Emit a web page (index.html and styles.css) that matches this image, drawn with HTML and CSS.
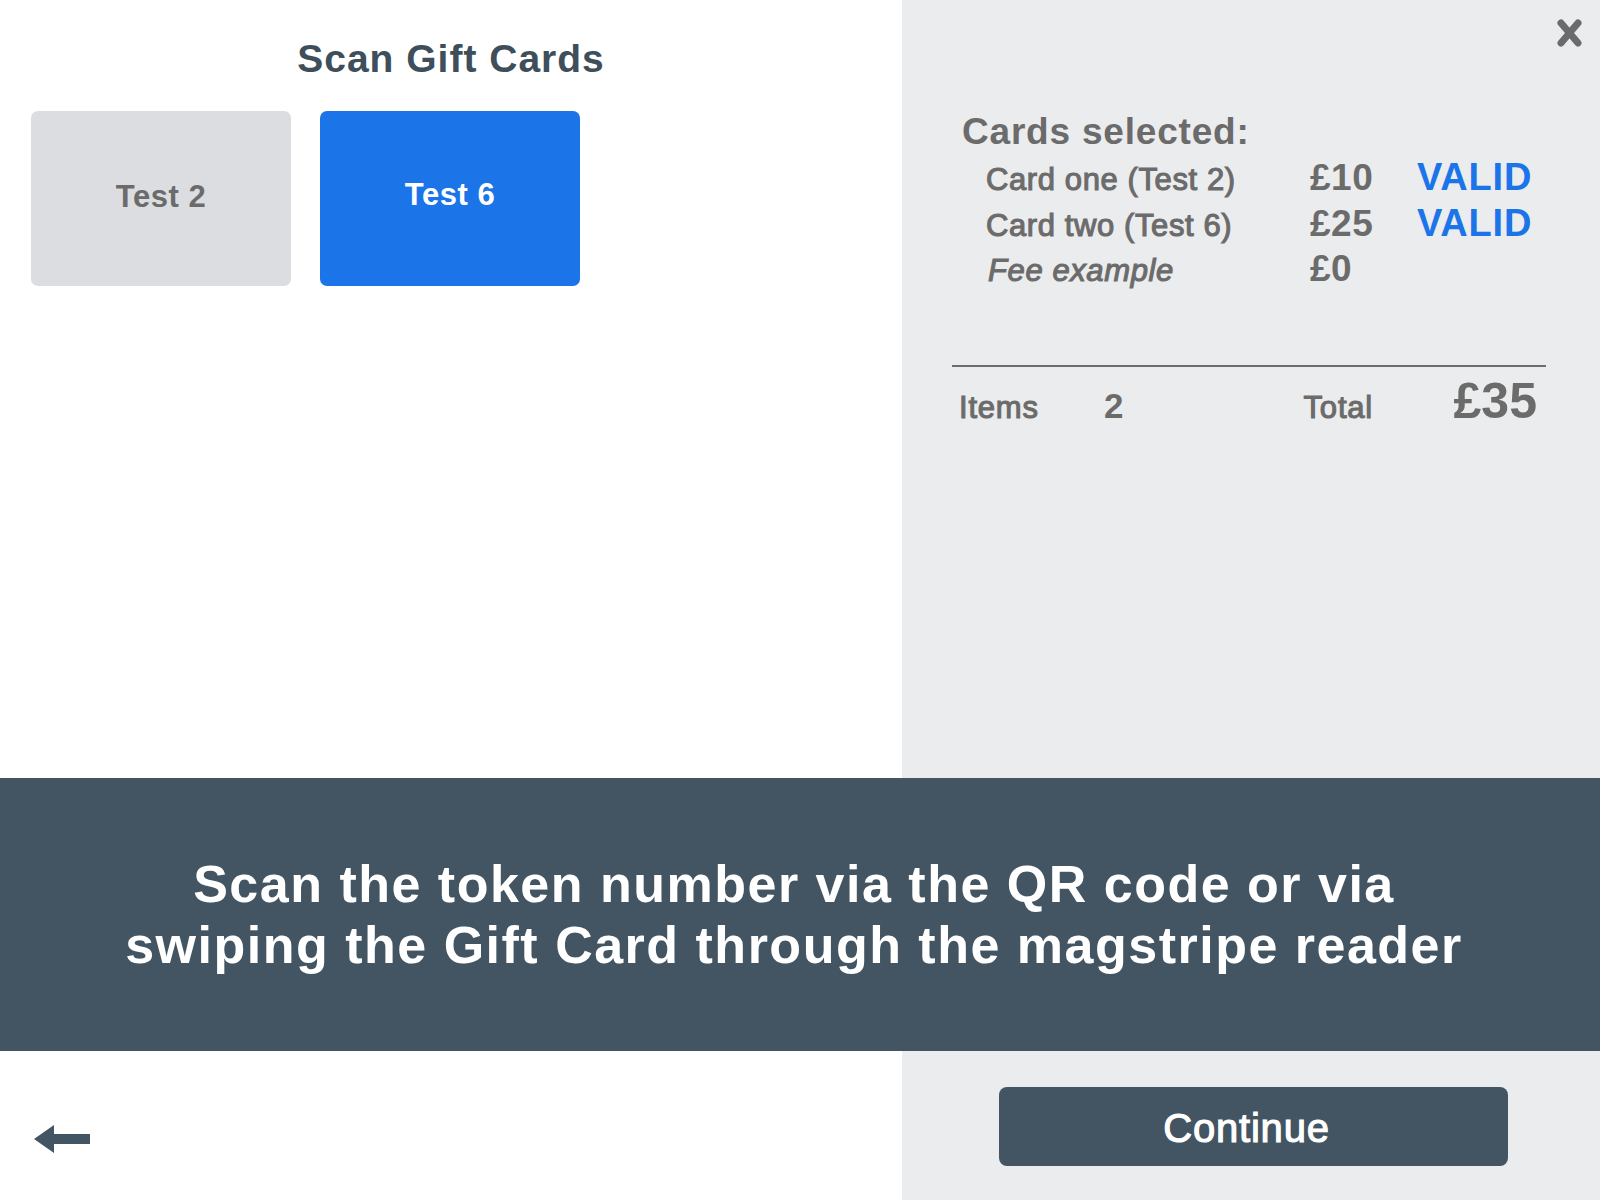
FILE: index.html
```html
<!DOCTYPE html>
<html lang="en">
<head>
<meta charset="utf-8">
<title>Scan Gift Cards</title>
<link rel="stylesheet" href="styles.css">
</head>
<body>
<div class="screen">
  <div class="top">
    <section class="left">
      <h1 class="title">Scan Gift Cards</h1>
      <div class="cards">
        <button class="card card-grey">Test 2</button>
        <button class="card card-blue">Test 6</button>
      </div>
    </section>
    <aside class="right">
      <button class="close" aria-label="Close">
        <svg width="25" height="28" viewBox="0 0 25 28"><path d="M4 4 L21 24 M21 4 L4 24" stroke="#6b6b6b" stroke-width="7" stroke-linecap="round" fill="none"/></svg>
      </button>
      <div class="summary">
        <h2 class="heading">Cards selected:</h2>
        <div class="row">
          <span class="label">Card one (Test 2)</span>
          <span class="amount">£10</span>
          <span class="status">VALID</span>
        </div>
        <div class="row">
          <span class="label">Card two (Test 6)</span>
          <span class="amount">£25</span>
          <span class="status">VALID</span>
        </div>
        <div class="row">
          <span class="label label-italic">Fee example</span>
          <span class="amount">£0</span>
        </div>
        <div class="divider"></div>
        <div class="totals">
          <span class="t-label t-items">Items</span>
          <span class="t-count">2</span>
          <span class="t-label t-total">Total</span>
          <span class="t-sum">£35</span>
        </div>
      </div>
    </aside>
  </div>
  <div class="banner">
    <p class="banner-text">Scan the token number via the QR code or via<br>swiping the Gift Card through the magstripe reader</p>
  </div>
  <div class="bottom">
    <div class="bottom-left">
      <button class="back" aria-label="Back">
        <svg width="56" height="28" viewBox="0 0 56 28"><polygon points="0,14 20,0 20,9 56,9 56,19 20,19 20,28" fill="#435562"/></svg>
      </button>
    </div>
    <div class="bottom-right">
      <button class="continue">Continue</button>
    </div>
  </div>
</div>
</body>
</html>
```
FILE: styles.css
```css
* { box-sizing: border-box; }
html, body { margin: 0; padding: 0; }
body {
  font-family: "Liberation Sans", Arial, sans-serif;
  background: #ffffff;
  width: 1600px;
  height: 1200px;
  overflow: hidden;
}
button {
  font-family: inherit;
  border: 0;
  padding: 0;
  margin: 0;
  background: none;
  cursor: pointer;
}
.screen { width: 1600px; height: 1200px; display: flex; flex-direction: column; }

.top { height: 778px; display: flex; }
.left { width: 902px; background: #ffffff; }
.title {
  margin: 0;
  padding-top: 36px;
  font-size: 39px;
  line-height: 46px;
  font-weight: bold;
  letter-spacing: 1px;
  color: #3e4e5b;
  text-align: center;
}
.cards { display: flex; gap: 29px; padding-left: 31px; margin-top: 29px; }
.card {
  width: 260px;
  height: 175px;
  border-radius: 7px;
  font-size: 31px;
  font-weight: bold;
  letter-spacing: 0.5px;
  display: flex;
  align-items: center;
  justify-content: center;
  padding-bottom: 6px;
}
.card-grey { background: #dcdde0; color: #6b6b6b; padding-bottom: 4px; }
.card-blue { background: #1b74e8; color: #ffffff; padding-bottom: 8px; }

.right { flex: 1; background: #ebecee; position: relative; padding-top: 110px; }
.close { position: absolute; top: 19px; right: 18px; width: 25px; height: 28px; display: block; }
.close svg { display: block; }
.summary { margin: 0 54px 0 50px; color: #6b6b6b; }
.heading {
  margin: 0;
  padding-left: 10px;
  font-size: 37px;
  line-height: 44px;
  font-weight: bold;
  letter-spacing: 0.8px;
}
.row { display: flex; align-items: baseline; height: 46px; padding-left: 34px; }
.row:last-of-type { height: 47px; }
.label {
  width: 324px;
  font-size: 31px;
  line-height: 46px;
  letter-spacing: 0.6px;
  -webkit-text-stroke: 1.1px #6b6b6b;
}
.label-italic { font-style: italic; padding-left: 2px; }
.amount { width: 107px; font-size: 37px; line-height: 46px; font-weight: bold; letter-spacing: 0.5px; }
.status { font-size: 38px; line-height: 46px; font-weight: bold; color: #1b74e8; letter-spacing: 0.8px; }
.divider { height: 2px; background: #6d6d6d; margin-top: 73px; }
.totals { display: flex; align-items: baseline; margin-top: 6px; padding: 0 9px 0 7px; }
.t-label { font-size: 31px; line-height: 46px; -webkit-text-stroke: 1.1px #6b6b6b; letter-spacing: 0.8px; }
.t-items { width: 145px; }
.t-count { flex: 1; font-size: 35px; line-height: 46px; font-weight: bold; }
.t-total { width: 150px; }
.t-sum { font-size: 50px; line-height: 56px; font-weight: bold; }

.banner {
  height: 273px;
  background: #435562;
  display: flex;
  align-items: center;
  justify-content: center;
  padding-right: 12px;
}
.banner-text {
  margin: 0;
  color: #ffffff;
  font-size: 52px;
  line-height: 61px;
  font-weight: bold;
  letter-spacing: 1.5px;
  text-align: center;
}

.bottom { height: 149px; display: flex; }
.bottom-left { width: 902px; background: #ffffff; padding: 74px 0 0 34px; }
.back { display: block; width: 56px; height: 28px; }
.back svg { display: block; }
.bottom-right { flex: 1; background: #ebecee; display: flex; align-items: center; padding: 2px 0 0 97px; }
.continue {
  width: 509px;
  height: 79px;
  border-radius: 8px;
  background: #435562;
  color: #ffffff;
  font-size: 40px;
  -webkit-text-stroke: 1.1px #ffffff;
  letter-spacing: 0.8px;
  display: flex;
  align-items: center;
  justify-content: center;
  padding: 4px 14px 0 0;
}
```
